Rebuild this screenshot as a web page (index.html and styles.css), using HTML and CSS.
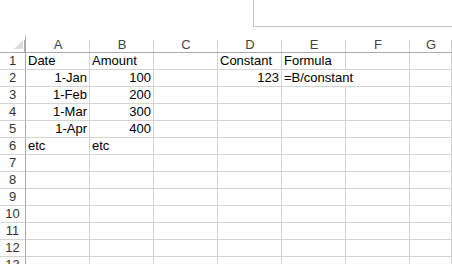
FILE: index.html
```html
<!DOCTYPE html>
<html lang="en">
<head>
  <meta charset="UTF-8" />
  <title>Sheet</title>
  <link rel="stylesheet" href="styles.css">
</head>
<body>
  <div class="textbox"></div>

  <div class="sheet">
    <div class="corner"><svg width="9" height="9" viewBox="0 0 9 9"><polygon points="9,0 9,9 0,9" fill="#dcdcdc"/></svg></div>
    <div class="col">A</div><div class="col">B</div><div class="col">C</div><div class="col">D</div>
    <div class="col">E</div><div class="col">F</div><div class="col">G</div>

    <div class="num">1</div><div class="cell">Date</div><div class="cell">Amount</div><div class="cell"></div>
    <div class="cell">Constant</div><div class="cell">Formula</div><div class="cell"></div><div class="cell"></div>

    <div class="num">2</div><div class="cell r">1-Jan</div><div class="cell r">100</div><div class="cell"></div>
    <div class="cell r">123</div><div class="cell wide">=B/constant</div><div class="cell"></div>

    <div class="num">3</div><div class="cell r">1-Feb</div><div class="cell r">200</div><div class="cell"></div>
    <div class="cell"></div><div class="cell"></div><div class="cell"></div><div class="cell"></div>

    <div class="num">4</div><div class="cell r">1-Mar</div><div class="cell r">300</div><div class="cell"></div>
    <div class="cell"></div><div class="cell"></div><div class="cell"></div><div class="cell"></div>

    <div class="num">5</div><div class="cell r">1-Apr</div><div class="cell r">400</div><div class="cell"></div>
    <div class="cell"></div><div class="cell"></div><div class="cell"></div><div class="cell"></div>

    <div class="num">6</div><div class="cell">etc</div><div class="cell">etc</div><div class="cell"></div>
    <div class="cell"></div><div class="cell"></div><div class="cell"></div><div class="cell"></div>

    <div class="num">7</div><div class="cell"></div><div class="cell"></div><div class="cell"></div>
    <div class="cell"></div><div class="cell"></div><div class="cell"></div><div class="cell"></div>

    <div class="num">8</div><div class="cell"></div><div class="cell"></div><div class="cell"></div>
    <div class="cell"></div><div class="cell"></div><div class="cell"></div><div class="cell"></div>

    <div class="num">9</div><div class="cell"></div><div class="cell"></div><div class="cell"></div>
    <div class="cell"></div><div class="cell"></div><div class="cell"></div><div class="cell"></div>

    <div class="num">10</div><div class="cell"></div><div class="cell"></div><div class="cell"></div>
    <div class="cell"></div><div class="cell"></div><div class="cell"></div><div class="cell"></div>

    <div class="num">11</div><div class="cell"></div><div class="cell"></div><div class="cell"></div>
    <div class="cell"></div><div class="cell"></div><div class="cell"></div><div class="cell"></div>

    <div class="num">12</div><div class="cell"></div><div class="cell"></div><div class="cell"></div>
    <div class="cell"></div><div class="cell"></div><div class="cell"></div><div class="cell"></div>

    <div class="num">13</div><div class="cell"></div><div class="cell"></div><div class="cell"></div>
    <div class="cell"></div><div class="cell"></div><div class="cell"></div><div class="cell"></div>
  </div>
</body>
</html>
```

FILE: styles.css
```css
* { box-sizing: border-box; margin: 0; padding: 0; }

body {
  font-family: 'Liberation Sans', Arial, sans-serif;
  font-size: 13px;
  color: #000;
  background: #fff;
  width: 452px;
  height: 264px;
  overflow: hidden;
  position: relative;
}

.textbox {
  position: absolute;
  left: 253px;
  top: -10px;
  width: 220px;
  height: 37px;
  border: 1px solid #c6c6c6;
}

.sheet {
  margin-top: 36px;
  display: grid;
  grid-template-columns: 26px repeat(6, 64px) 1fr;
  grid-auto-rows: 17px;
}

.corner {
  display: flex;
  align-items: flex-end;
  justify-content: flex-end;
  padding: 0 2px 3px 0;
  border-bottom: 1px solid #ababab;
  border-right: 1px solid #ababab;
  background: linear-gradient(#ababab, #ababab) right 4px / 1px 13px no-repeat;
}

.col {
  text-align: center;
  line-height: 17px;
  color: #444;
  border-bottom: 1px solid #ababab;
  background: linear-gradient(#d0d0d0, #d0d0d0) right 4px / 1px 13px no-repeat;
}

.num {
  text-align: center;
  line-height: 16px;
  color: #333;
  border-right: 1px solid #ababab;
  border-bottom: 1px solid #d4d4d4;
}

.cell {
  line-height: 16px;
  padding: 0 2px;
  white-space: nowrap;
  border-right: 1px solid #d4d4d4;
  border-bottom: 1px solid #d4d4d4;
}

.cell.r { text-align: right; }

.cell.wide { grid-column: span 2; }
```
